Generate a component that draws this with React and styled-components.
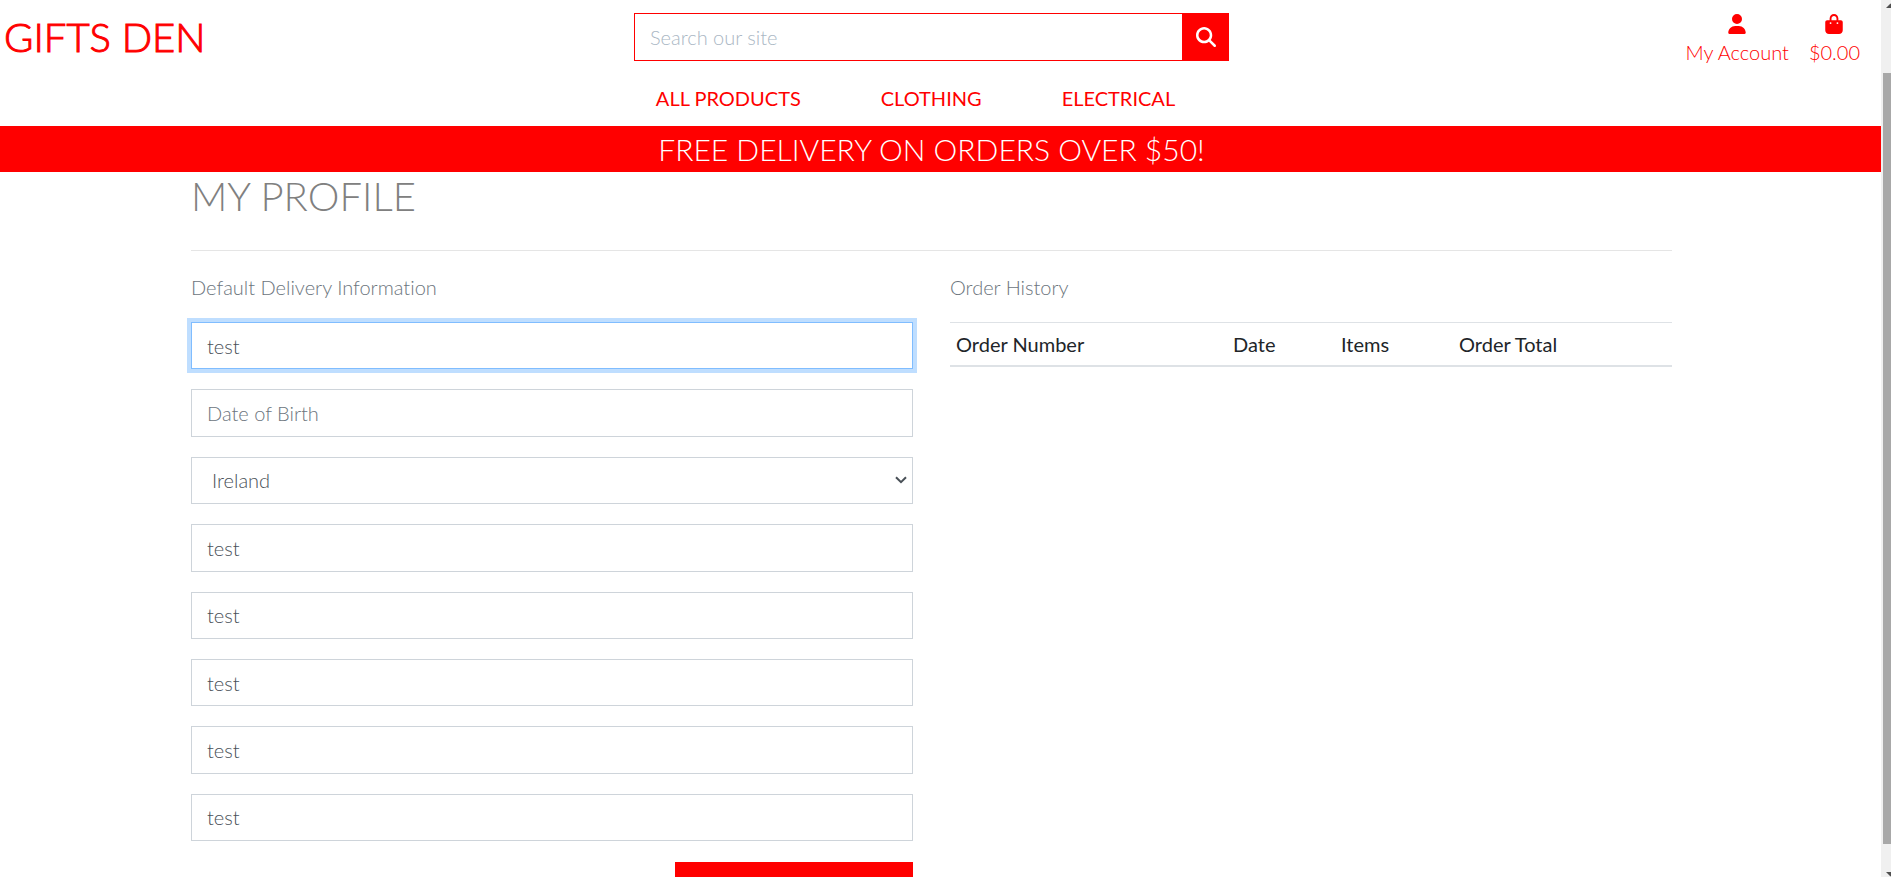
import React from "react";
import styled, { createGlobalStyle, css } from "styled-components";
import { FaUser, FaBagShopping, FaMagnifyingGlass } from "react-icons/fa6";

const GlobalStyle = createGlobalStyle`
  *, *::before, *::after { box-sizing: border-box; }
  body {
    margin: 0;
    background: #fff;
    color: #212529;
    font-family: Lato, "Liberation Sans", sans-serif;
    font-size: 20px;
    font-weight: 300;
    font-variant-ligatures: none;
    line-height: 30px;
  }
`;

const Window = styled.div`
  display: flex;
  height: 100vh;
  overflow: hidden;
`;

const Page = styled.div`
  flex: 1;
  min-width: 0;
  overflow: hidden;
`;

const Header = styled.header`
  display: grid;
  grid-template-columns: repeat(3, 1fr);
  align-items: start;
  height: 74px;
  padding-right: 18px;
`;

const Logo = styled.a`
  padding: 12px 0 0 4px;
  color: #f00;
  font-size: 40px;
  font-weight: 300;
  line-height: 50px;
  text-decoration: none;
  -webkit-text-stroke: 1px #f00;
`;

const Search = styled.form`
  display: flex;
  height: 48px;
  margin: 13px 13px 0;
`;

const SearchInput = styled.input`
  flex: 1;
  min-width: 0;
  padding: 0 15px;
  border: 1px solid #f00;
  border-right: 0;
  border-radius: 0;
  color: #495057;
  font: inherit;
  outline: 0;
  &::placeholder { color: #aab7c4; opacity: 1; }
`;

const SearchButton = styled.button`
  display: flex;
  align-items: center;
  justify-content: center;
  width: 47px;
  padding: 0;
  border: 0;
  background: #f00;
  color: #fff;
  font-size: 20px;
`;

const Account = styled.div`
  display: flex;
  justify-content: flex-end;
  gap: 20px;
  padding: 14px 3px 0 0;
`;

const AccountLink = styled.a`
  display: flex;
  flex-direction: column;
  align-items: center;
  gap: 3px;
  color: #f00;
  text-decoration: none;
`;

const Nav = styled.nav`
  display: flex;
  justify-content: center;
  gap: 80px;
  height: 52px;
  padding: 9px 50px 0 0;
`;

const NavLink = styled.a`
  color: #f00;
  font-weight: 400;
  text-decoration: none;
`;

const Banner = styled.div`
  height: 46px;
  padding: 5px 18px 0 0;
  background: #f00;
  color: #fff;
  font-size: 30px;
  line-height: 36px;
  text-align: center;
`;

const Body = styled.div`
  padding-right: 18px;
`;

const Container = styled.main`
  max-width: 1519px;
  margin: 0 auto;
  padding: 0 19px;
`;

const Title = styled.h2`
  height: 79px;
  margin: 0;
  border-bottom: 1px solid #e5e5e5;
  color: #808080;
  font-size: 40px;
  font-weight: 300;
  line-height: 48px;
`;

const Columns = styled.div`
  display: grid;
  grid-template-columns: 1fr 1fr;
  gap: 37px;
  padding-top: 21px;
`;

const Caption = styled.p`
  margin: 0 0 20px;
  color: #6c757d;
`;

const Fields = styled.div`
  display: grid;
  grid-auto-rows: 1fr;
  gap: 20px;
  height: 519px;
`;

const control = css`
  width: 100%;
  height: 100%;
  border: 1px solid #ced4da;
  border-radius: 0;
  background: #fff;
  color: #495057;
  font: inherit;
  outline: 0;
`;

const Field = styled.input`
  ${control}
  padding: 0 15px;
  &::placeholder { color: #6c757d; opacity: 1; }
  ${(p) => p.$active && css`
    border-color: #80bdff;
    box-shadow: 0 0 0 4px #bfdeff;
  `}
`;

const SelectWrap = styled.div`
  position: relative;
`;

const Select = styled.select`
  ${control}
  display: block;
  padding: 0 20px;
  appearance: none;
`;

const Chevron = styled.svg`
  position: absolute;
  top: 0;
  bottom: 0;
  right: 6px;
  margin: auto 0;
  pointer-events: none;
`;

const Submit = styled.button`
  display: block;
  width: 238px;
  height: 48px;
  margin: 21px 0 0 auto;
  border: 0;
  background: #f00;
`;

const Table = styled.table`
  width: 100%;
  table-layout: fixed;
  border-collapse: separate;
  border-spacing: 0;
`;

const Th = styled.th`
  width: ${(p) => p.$width};
  padding: 6px;
  border-top: 1px solid #dee2e6;
  border-bottom: 2px solid #dee2e6;
  font-weight: 400;
  text-align: left;
`;

const Scrollbar = styled.div`
  display: flex;
  flex-direction: column;
  width: 10px;
  background: #f0f0f0;
  overflow: hidden;
`;

const Arrow = styled.svg`
  display: block;
  flex: none;
`;

const Thumb = styled.div`
  flex: 1;
  margin: 56px 0 16px 2px;
  background: #a8a8a8;
`;

const fields = [
  { label: "Full Name", value: "test", active: true },
  { label: "Date of Birth" },
  { label: "Country", select: true },
  { label: "Postal Code", value: "test" },
  { label: "Town or City", value: "test" },
  { label: "Street Address 1", value: "test" },
  { label: "Street Address 2", value: "test" },
  { label: "County", value: "test" },
];

const columns = [
  ["Order Number", "277px"],
  ["Date", "108px"],
  ["Items", "118px"],
  ["Order Total", "auto"],
];

function CountrySelect({ label }) {
  return (
    <SelectWrap>
      <Select aria-label={label} defaultValue="IE">
        <option value="IE">Ireland</option>
      </Select>
      <Chevron width="12" height="8" viewBox="0 0 12 8" fill="none" stroke="#495057" strokeWidth="2">
        <path d="M1 1.2 6 6.2 11 1.2" />
      </Chevron>
    </SelectWrap>
  );
}

export default function App() {
  return (
    <>
      <GlobalStyle />
      <Window>
        <Page>
          <Header>
            <Logo href="#">GIFTS DEN</Logo>
            <Search onSubmit={(e) => e.preventDefault()}>
              <SearchInput type="text" aria-label="Search our site" placeholder="Search our site" />
              <SearchButton type="submit" aria-label="Search">
                <FaMagnifyingGlass />
              </SearchButton>
            </Search>
            <Account>
              <AccountLink href="#">
                <FaUser />
                My Account
              </AccountLink>
              <AccountLink href="#">
                <FaBagShopping />
                $0.00
              </AccountLink>
            </Account>
          </Header>
          <Nav>
            <NavLink href="#">ALL PRODUCTS</NavLink>
            <NavLink href="#">CLOTHING</NavLink>
            <NavLink href="#">ELECTRICAL</NavLink>
          </Nav>
          <Banner>FREE DELIVERY ON ORDERS OVER $50!</Banner>
          <Body>
            <Container>
              <Title>MY PROFILE</Title>
              <Columns>
                <form onSubmit={(e) => e.preventDefault()}>
                  <Caption>Default Delivery Information</Caption>
                  <Fields>
                    {fields.map((f) =>
                      f.select ? (
                        <CountrySelect key={f.label} label={f.label} />
                      ) : (
                        <Field
                          key={f.label}
                          type="text"
                          aria-label={f.label}
                          placeholder={f.label}
                          defaultValue={f.value}
                          $active={f.active}
                        />
                      )
                    )}
                  </Fields>
                  <Submit type="submit" aria-label="Update Information" />
                </form>
                <section>
                  <Caption>Order History</Caption>
                  <Table>
                    <thead>
                      <tr>
                        {columns.map(([name, width]) => (
                          <Th key={name} scope="col" $width={width}>{name}</Th>
                        ))}
                      </tr>
                    </thead>
                  </Table>
                </section>
              </Columns>
            </Container>
          </Body>
        </Page>
        <Scrollbar aria-hidden="true">
          <Arrow width="10" height="17" viewBox="0 0 10 17">
            <path d="M5 8 9.500 3.500 14 8Z" fill="#505050" />
          </Arrow>
          <Thumb />
          <Arrow width="10" height="17" viewBox="0 0 10 17">
            <path d="M5 12 9.500 16.500 14 12Z" fill="#505050" />
          </Arrow>
        </Scrollbar>
      </Window>
    </>
  );
}
